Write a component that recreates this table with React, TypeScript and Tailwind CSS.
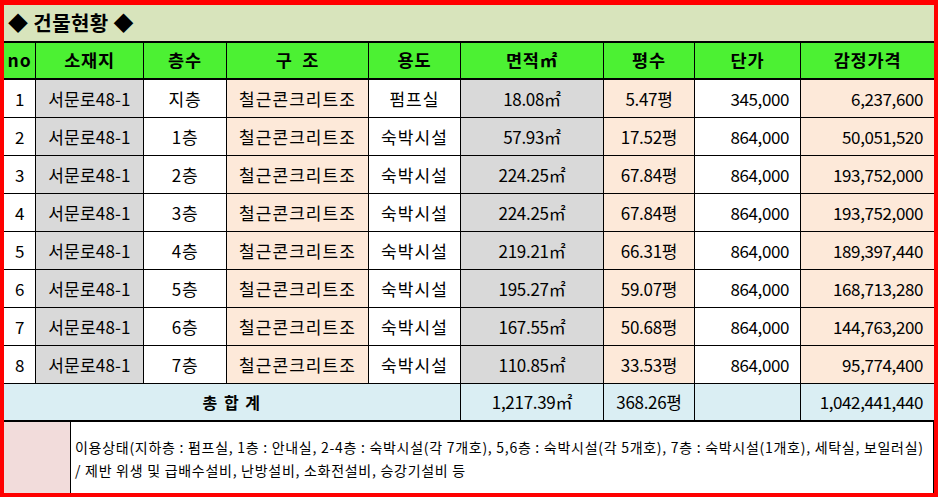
import React from "react";

const rows = [
  ["1", "서문로48-1", "지층", "철근콘크리트조", "펌프실", "18.08㎡", "5.47평", "345,000", "6,237,600"],
  ["2", "서문로48-1", "1층", "철근콘크리트조", "숙박시설", "57.93㎡", "17.52평", "864,000", "50,051,520"],
  ["3", "서문로48-1", "2층", "철근콘크리트조", "숙박시설", "224.25㎡", "67.84평", "864,000", "193,752,000"],
  ["4", "서문로48-1", "3층", "철근콘크리트조", "숙박시설", "224.25㎡", "67.84평", "864,000", "193,752,000"],
  ["5", "서문로48-1", "4층", "철근콘크리트조", "숙박시설", "219.21㎡", "66.31평", "864,000", "189,397,440"],
  ["6", "서문로48-1", "5층", "철근콘크리트조", "숙박시설", "195.27㎡", "59.07평", "864,000", "168,713,280"],
  ["7", "서문로48-1", "6층", "철근콘크리트조", "숙박시설", "167.55㎡", "50.68평", "864,000", "144,763,200"],
  ["8", "서문로48-1", "7층", "철근콘크리트조", "숙박시설", "110.85㎡", "33.53평", "864,000", "95,774,400"],
];

const bg = ["bg-white", "bg-[#d9d9d9]", "bg-white", "bg-[#fde9d9]", "bg-white", "bg-[#d9d9d9]", "bg-[#fde9d9]", "bg-white", "bg-[#fde9d9]"];
const cellCls = [
  "justify-center tracking-[-0.3px]",
  "justify-center tracking-[0.2px]",
  "justify-center tracking-[0.8px]",
  "justify-center tracking-[1.1px]",
  "justify-center tracking-[1.1px]",
  "justify-center tracking-[-0.3px]",
  "justify-center tracking-[-0.3px]",
  "justify-end pr-[11px] tracking-[-0.4px]",
  "justify-end pr-[11px] tracking-[-0.4px]",
];

const headers = ["no", "소재지", "층수", "구  조", "용도", "면적㎡", "평수", "단가", "감정가격"];

export default function App() {
  return (
    <div
      className="w-[938px] h-[497px] border-[4px] border-t-[5px] border-[#ff0000] bg-white text-black flex flex-col"
      style={{ fontFamily: '"Noto Sans CJK KR", "Noto Sans", sans-serif' }}
    >
      <div className="h-[38px] bg-[#d8e4bc] border-b-2 border-black flex items-center pl-[4px] text-[20px] font-bold tracking-[0.4px]">
        ◆ 건물현황 ◆
      </div>
      <div className="grid grid-cols-[32px_108px_83px_142px_92px_143px_91px_106px_133px] border-r border-black">
        {headers.map((h, i) => (
          <div
            key={h}
            className={`h-[37px] bg-[#4cf133] border-b-2 border-b-black ${i < 8 ? "border-r border-r-black" : ""} flex items-center justify-center font-bold text-[17.5px] tracking-[0.8px] whitespace-pre`}
          >
            {h}
          </div>
        ))}
        {rows.map((r) =>
          r.map((c, i) => (
            <div
              key={r[0] + "-" + i}
              className={`h-[38px] ${bg[i]} border-b border-b-black ${i < 8 ? "border-r border-r-black" : ""} flex items-center ${cellCls[i]} text-[17px] whitespace-nowrap`}
            >
              {c}
            </div>
          ))
        )}
        <div className="col-span-5 h-[38px] bg-[#daeef3] border-b-2 border-b-black border-r border-r-black flex items-center justify-center font-bold text-[16px] tracking-[1.5px] whitespace-pre">
          총 합 계
        </div>
        <div className="h-[38px] bg-[#daeef3] border-b-2 border-b-black border-r border-r-black flex items-center justify-center text-[17px] tracking-[-0.3px]">
          1,217.39㎡
        </div>
        <div className="h-[38px] bg-[#daeef3] border-b-2 border-b-black border-r border-r-black flex items-center justify-center text-[17px] tracking-[-0.3px]">
          368.26평
        </div>
        <div className="h-[38px] bg-[#daeef3] border-b-2 border-b-black border-r border-r-black" />
        <div className="h-[38px] bg-[#daeef3] border-b-2 border-b-black flex items-center justify-end pr-[11px] text-[17px] tracking-[-0.4px]">
          1,042,441,440
        </div>
      </div>
      <div className="flex-1 flex border-r border-black">
        <div className="w-[67px] bg-[#f2dcdb] border-r border-black" />
        <div className="flex-1 flex flex-col justify-center pl-[4px] pt-[2px] text-[14px] leading-[23px] whitespace-nowrap tracking-[0.72px]">
          <div>이용상태(지하층 : 펌프실, 1층 : 안내실, 2-4층 : 숙박시설(각 7개호), 5,6층 : 숙박시설(각 5개호), 7층 : 숙박시설(1개호), 세탁실, 보일러실)</div>
          <div>/ 제반 위생 및 급배수설비, 난방설비, 소화전설비, 승강기설비 등</div>
        </div>
      </div>
    </div>
  );
}
